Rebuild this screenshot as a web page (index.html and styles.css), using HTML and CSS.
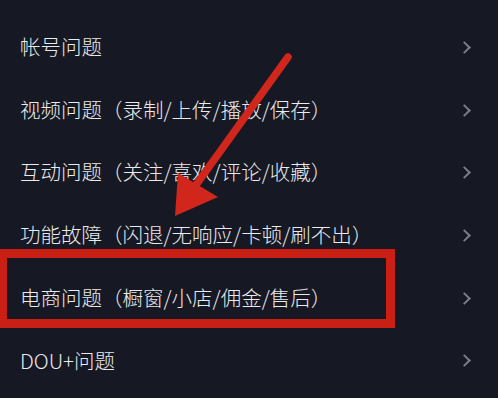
FILE: index.html
```html
<!DOCTYPE html>
<html lang="zh-CN">
<head>
<meta charset="utf-8">
<link rel="stylesheet" href="styles.css">
</head>
<body>
<div class="screen">
  <ul class="menu">
    <li class="row"><span class="label">帐号问题</span><span class="chev"></span></li>
    <li class="row"><span class="label">视频问题（录制/上传/播放/保存）</span><span class="chev"></span></li>
    <li class="row"><span class="label">互动问题（关注/喜欢/评论/收藏）</span><span class="chev"></span></li>
    <li class="row"><span class="label">功能故障（闪退/无响应/卡顿/刷不出）</span><span class="chev"></span></li>
    <li class="row"><span class="label">电商问题（橱窗/小店/佣金/售后）</span><span class="chev"></span></li>
    <li class="row"><span class="label">DOU+问题</span><span class="chev"></span></li>
  </ul>
  <div class="highlight"></div>
  <svg class="arrow" width="498" height="398" viewBox="0 0 498 398">
    <line x1="288" y1="57" x2="196" y2="185" stroke="#d0261c" stroke-width="7.5" stroke-linecap="round"/>
    <polygon points="175,216 178,173 218,197" fill="#d0261c"/>
  </svg>
</div>
</body>
</html>
```
FILE: styles.css
```css
* { box-sizing: border-box; }
html, body {
  margin: 0;
  padding: 0;
  background: #161823;
}
.screen {
  position: relative;
  width: 498px;
  height: 398px;
  overflow: hidden;
  background: #161823;
  font-family: "Noto Sans CJK SC", "Noto Sans", sans-serif;
}
.menu {
  list-style: none;
  margin: 0;
  padding: 15px 0 0 20px;
}
.row {
  display: flex;
  align-items: center;
  justify-content: space-between;
  height: 62.7px;
  padding-right: 25px;
}
.label {
  color: #ebebed;
  font-size: 20.5px;
  font-weight: 300;
  line-height: 1;
  white-space: nowrap;
}
.chev {
  width: 9px;
  height: 9px;
  border-top: 2px solid #7c7d84;
  border-right: 2px solid #7c7d84;
  transform: rotate(45deg);
  margin-right: 4px;
  margin-top: 2px;
}
.highlight {
  position: absolute;
  left: 0;
  top: 249px;
  width: 395px;
  height: 79px;
  border: 9px solid #c91f15;
  border-left-width: 7px;
}
.arrow {
  position: absolute;
  left: 0;
  top: 0;
  pointer-events: none;
}
```
